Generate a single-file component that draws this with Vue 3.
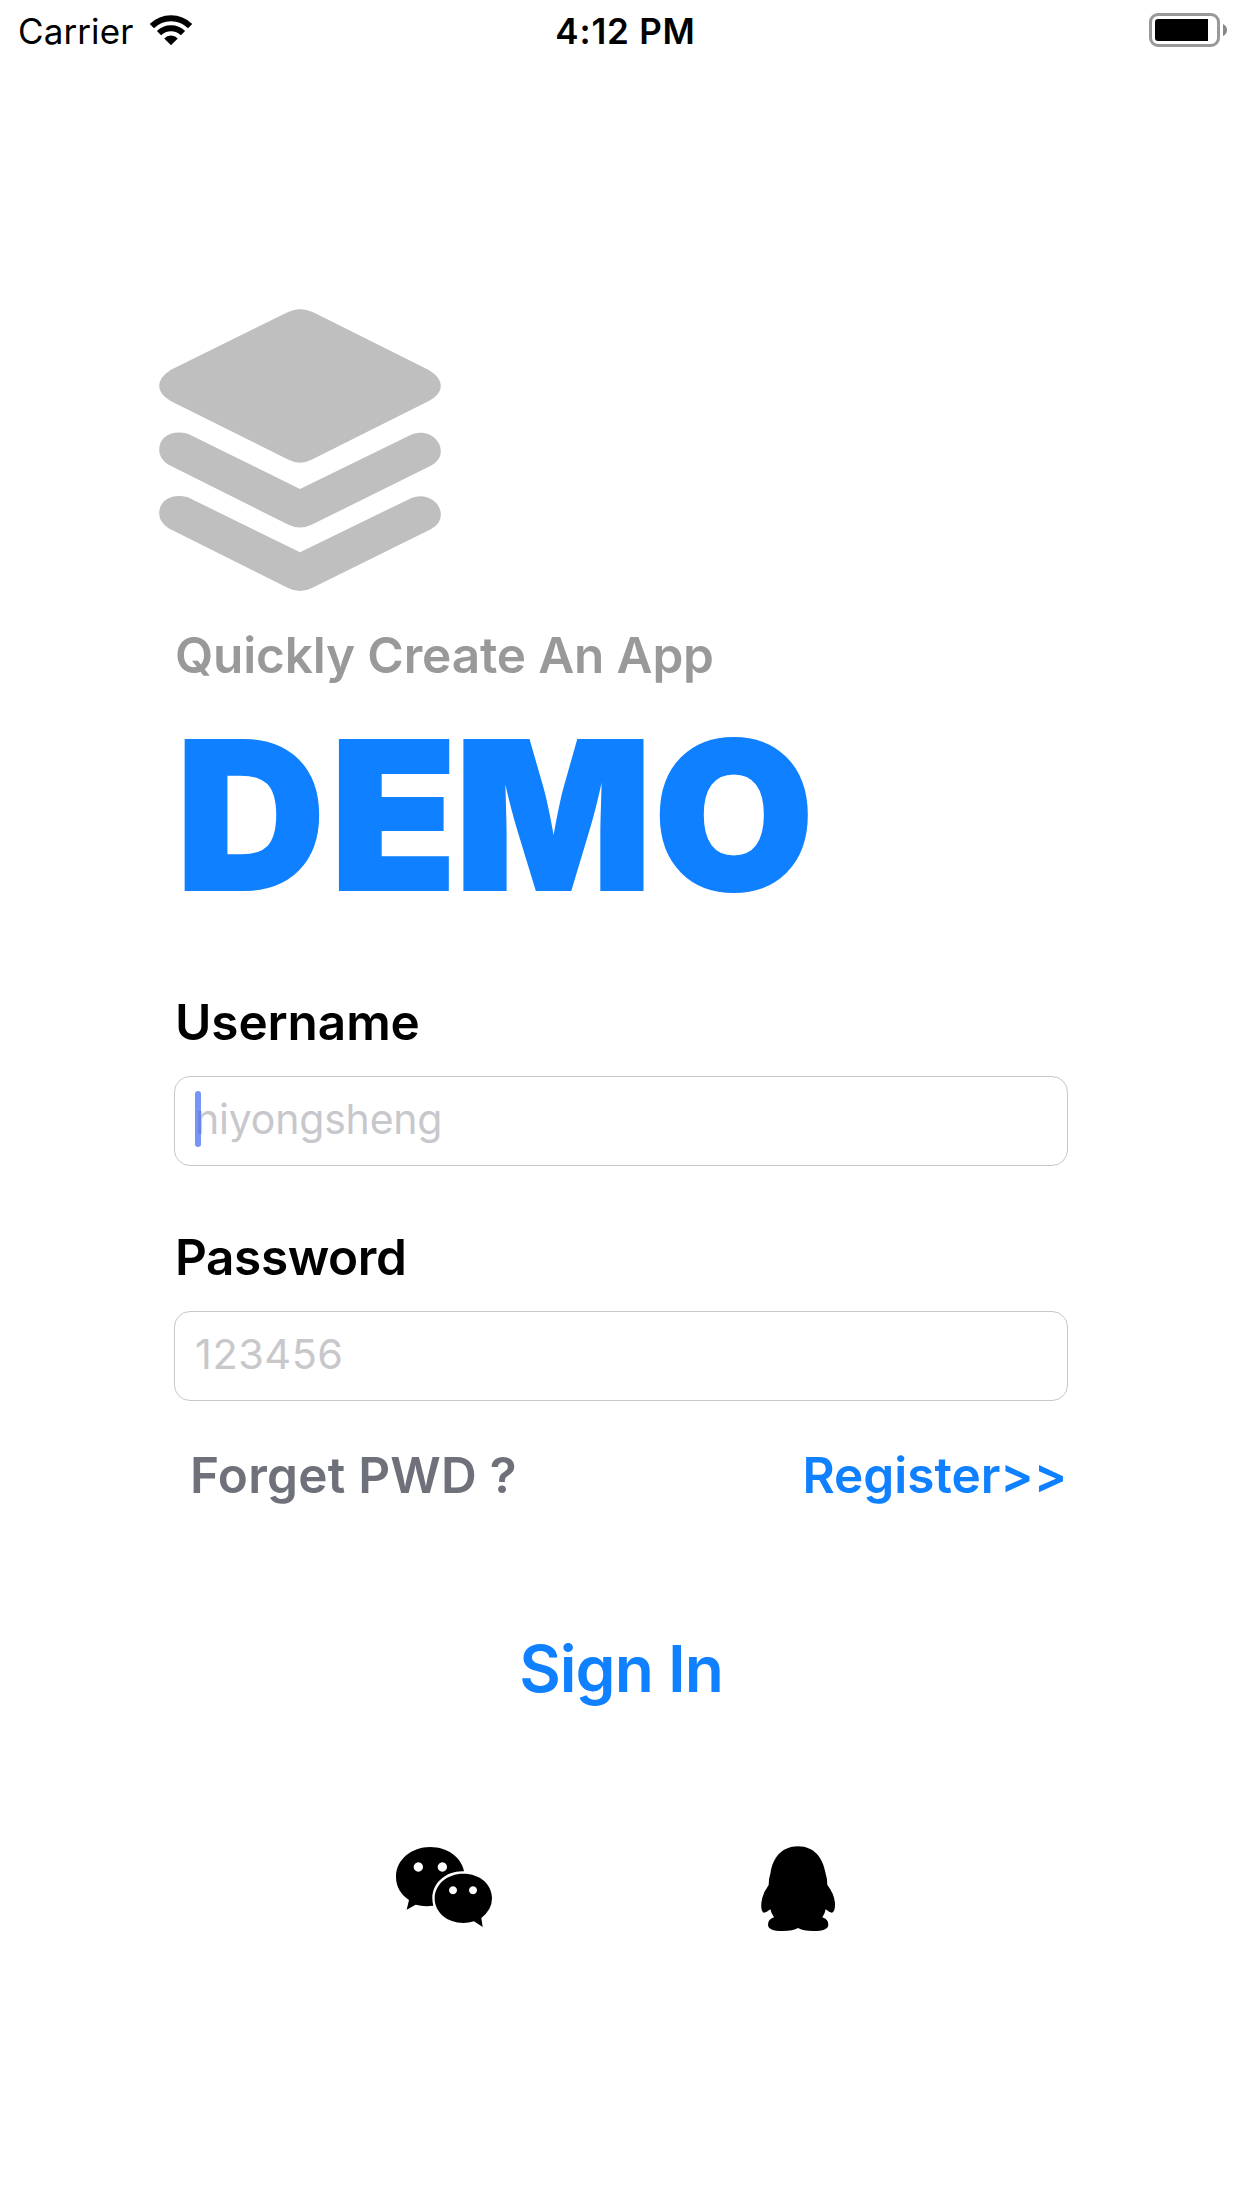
<script setup>
import { ref } from 'vue'

const fields = ref([
  { label: 'Username', hint: 'niyongsheng', cls: 'user', focused: true },
  { label: 'Password', hint: '123456', cls: 'pass', focused: false },
])
</script>

<template>
  <div class="screen">
    <header class="status">
      <div class="side">
        <span class="carrier">Carrier</span>
        <svg class="wifi" viewBox="0 0 42 31" width="42" height="31">
          <path d="M1.9 11.1A27 27 0 0 1 40.1 11.1" fill="none" stroke="#000" stroke-width="6" />
          <path d="M9 18.2A17 17 0 0 1 33 18.2" fill="none" stroke="#000" stroke-width="6" />
          <path d="M21 30.2L14.2 23.4A9.6 9.6 0 0 1 27.8 23.4Z" />
        </svg>
      </div>
      <span class="time">4:12 PM</span>
      <div class="side end">
        <svg class="battery" viewBox="0 0 79 34" width="79" height="34">
          <rect x="1.5" y="1.5" width="68" height="31" rx="7.5" fill="none" stroke="#999" stroke-width="3" />
          <path d="M9 6H59V28H9Q6 28 6 25V9Q6 6 9 6Z" />
          <path d="M74 11Q78 13 78 17Q78 21 74 23Z" fill="#888" />
        </svg>
      </div>
    </header>

    <main class="content">
      <svg class="logo" viewBox="58 57 844 845" width="282" height="282" fill="#bfbfbf">
        <path d="M438 69Q480 46 524 69L866 240Q902 262 902 288Q902 314 866 333L516 508Q480 527 444 508L92 333Q58 312 58 288Q58 262 92 240Z" />
        <path d="M144 431L480 596L808 436C850 414 902 440 902 484Q902 510 872 527L516 703Q480 721 444 703L86 524Q58 505 58 480C58 440 95 418 144 431Z" />
        <path transform="translate(0 190)" d="M144 431L480 596L808 436C850 414 902 440 902 484Q902 510 872 527L516 703Q480 721 444 703L86 524Q58 505 58 480C58 440 95 418 144 431Z" />
      </svg>
      <p class="subtitle">Quickly Create An App</p>
      <h1 class="title"><span class="kern-d">D</span><span class="kern-e">E</span><span class="kern-m">M</span>O</h1>

      <div v-for="f in fields" :key="f.label" class="field">
        <label :class="['label', f.cls]">{{ f.label }}</label>
        <div class="box">
          <span :class="['hint', f.cls]">{{ f.hint }}</span>
          <i v-if="f.focused" class="caret"></i>
        </div>
      </div>

      <div class="links">
        <a class="forget">Forget PWD ?</a>
        <a class="register">Register&gt;&gt;</a>
      </div>
      <a class="signin">Sign In</a>
    </main>

    <footer class="social">
      <svg viewBox="48 48 288 246" width="96" height="82">
        <path fill-rule="evenodd" d="M150 51C205 51 245 84 252 124C202 121 157 156 157 205Q157 217 160 227Q132 231 107 224L80 239L87 210C62 193 48 170 48 140C48 88 96 51 150 51ZM115 97a14 14 0 1 0 .1 0ZM187 97a14 14 0 1 0 .1 0Z" />
        <path fill-rule="evenodd" d="M250 131C300 131 336 163 336 205Q336 239 304 264L308 291L282 274Q266 279 250 279C202 279 164 248 164 205C164 163 202 131 250 131ZM219 169a12 12 0 1 0 .1 0ZM279 169a12 12 0 1 0 .1 0Z" />
      </svg>
      <svg viewBox="60 48 228 258" width="76" height="86">
        <path d="M174 49C224 49 249 86 256 127Q262 146 262 165Q282 190 285 219Q286 243 276 248Q267 247 257 238Q255 251 247 262Q265 268 265 284Q265 303 220 303Q188 303 174 294Q160 303 128 303Q84 303 84 284Q84 268 102 262Q94 251 91 238Q81 247 71 248Q62 243 64 219Q67 190 86 165Q86 146 92 127C98 86 124 49 174 49Z" />
      </svg>
    </footer>
  </div>
</template>

<style>
body {
  background: #fff;
}
</style>

<style scoped>
.screen {
  width: 1242px;
  height: 2208px;
  overflow: hidden;
  background: #fff;
  color: #000;
  font-family: Inter, "Liberation Sans", sans-serif;
  white-space: nowrap;
}
.status {
  display: flex;
  height: 62px;
  padding: 0 14px 0 18px;
  line-height: 62px;
  font-size: 35px;
}
.side {
  display: flex;
  flex: 1 1 0;
}
.end {
  justify-content: flex-end;
}
.carrier {
  width: 132px;
  letter-spacing: 0.1px;
}
.wifi {
  margin-top: 15px;
}
.time {
  margin-left: 5px;
  font-weight: 600;
  letter-spacing: 0.8px;
}
.battery {
  margin-top: 13px;
}
.content {
  display: flex;
  flex-direction: column;
  margin: 247px 174px 0;
}
.logo {
  margin-left: -15px;
}
.subtitle {
  margin: 32px 0 0 1px;
  font-size: 49.5px;
  line-height: 64px;
  font-weight: 600;
  letter-spacing: -0.15px;
  color: #999;
}
.title {
  margin: 18px 0 65px 2px;
  font-size: 206.5px;
  line-height: 220px;
  font-weight: 900;
  color: #0f80ff;
  -webkit-text-stroke: 2px #0f80ff;
}
.kern-d {
  letter-spacing: 5px;
}
.kern-e {
  letter-spacing: -2px;
}
.kern-m {
  letter-spacing: 1.5px;
}
.field {
  display: flex;
  flex-direction: column;
  margin-bottom: 59px;
}
.label {
  margin: 0 0 22px 1px;
  font-size: 49.5px;
  line-height: 64px;
  font-weight: 600;
}
.label.user {
  letter-spacing: -0.1px;
}
.label.pass {
  letter-spacing: -0.4px;
}
.box {
  position: relative;
  box-sizing: border-box;
  height: 90px;
  padding-left: 20px;
  border: 1px solid #c8c8c8;
  border-radius: 16px;
  font-size: 41px;
  line-height: 84px;
  color: #c7c7cc;
}
.hint.user {
  letter-spacing: -0.2px;
}
.hint.pass {
  font-size: 41.5px;
  letter-spacing: 0.5px;
}
.caret {
  position: absolute;
  left: 20px;
  top: 14px;
  width: 6px;
  height: 56px;
  border-radius: 3px;
  background: rgba(66, 107, 242, 0.72);
}
.links {
  display: flex;
  justify-content: space-between;
  margin-top: -17px;
  padding: 0 1px 0 16px;
  font-size: 49.5px;
  line-height: 64px;
  font-weight: 600;
}
.forget {
  letter-spacing: 0.25px;
  color: #6e717a;
}
.register {
  color: #0f80ff;
}
.signin {
  align-self: center;
  margin-top: 122px;
  font-size: 64px;
  line-height: 80px;
  font-weight: 600;
  letter-spacing: -1px;
  color: #0f80ff;
}
.social {
  display: flex;
  gap: 268px;
  margin: 137px 0 0 396px;
}
</style>
